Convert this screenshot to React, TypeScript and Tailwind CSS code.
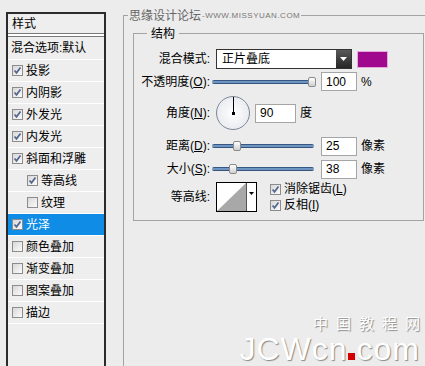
import React from "react"

const FONT = { fontFamily: '"Liberation Sans", "Noto Sans CJK SC", sans-serif' }

function CheckBox({ checked }: { checked: boolean }) {
  return (
    <span className="flex h-[11px] w-[11px] shrink-0 items-center justify-center border border-[#8c8c8c] bg-linear-to-br from-[#d8d8d8] to-[#fbfbfb]">
      {checked && (
        <svg width="9" height="9" viewBox="0 0 9 9">
          <path d="M1.5 4.5 L3.5 6.8 L7.5 1.5" fill="none" stroke="#56688f" strokeWidth="1.8" />
        </svg>
      )}
    </span>
  )
}

const styleRows = [
  { label: "投影", checked: true, indent: false },
  { label: "内阴影", checked: true, indent: false },
  { label: "外发光", checked: true, indent: false },
  { label: "内发光", checked: true, indent: false },
  { label: "斜面和浮雕", checked: true, indent: false },
  { label: "等高线", checked: true, indent: true },
  { label: "纹理", checked: false, indent: true },
  { label: "光泽", checked: true, indent: false, active: true },
  { label: "颜色叠加", checked: false, indent: false },
  { label: "渐变叠加", checked: false, indent: false },
  { label: "图案叠加", checked: false, indent: false },
  { label: "描边", checked: false, indent: false },
]

function Slider({ pos }: { pos: number }) {
  return (
    <div className="relative ml-[2px] flex h-[12px] w-[102px] items-center">
      <div className="h-[4px] w-full rounded-full bg-linear-to-b from-[#1d3a66] via-[#8db6e2] to-[#1a355e]" />
      <div
        className="absolute top-[1px] h-[10px] w-[8px] rounded-[2px] border border-[#8a8a8a] bg-linear-to-b from-white to-[#d0d0d0]"
        style={{ left: pos }}
      />
    </div>
  )
}

function NumBox({ value, width }: { value: string; width: string }) {
  return (
    <div className={`flex h-[19px] items-center border border-[#a5a5a5] bg-white pl-[4px] text-[12px] ${width}`}>
      {value}
    </div>
  )
}

export default function App() {
  return (
    <div className="relative flex h-[366px] w-[425px] items-start overflow-hidden bg-[#ececec] text-[12px] text-black" style={FONT}>
      {/* styles list */}
      <div className="ml-[6px] mt-[12px] h-[360px] w-[100px] shrink-0 border-2 border-[#2b2b2b] bg-[#eeeeee]">
        <div className="flex h-[19px] items-center pl-[4px]">样式</div>
        <div className="h-[4px] border-y border-[#7a7a7a] bg-white" />
        <div className="flex h-[23px] items-center border-b border-white pl-[3px]">混合选项:默认</div>
        {styleRows.map((r) => (
          <div
            key={r.label}
            className={`flex h-[22px] items-center gap-[3px] border-b border-white ${r.indent ? "pl-[19px]" : "pl-[4px]"} ${r.active ? "bg-[#0f8ce6] text-white" : ""}`}
          >
            <CheckBox checked={r.checked} />
            <span>{r.label}</span>
          </div>
        ))}
      </div>

      {/* outer group */}
      <div className="relative ml-[17px] mt-[15px] h-[360px] w-[320px] shrink-0 border-l border-t border-[#a3a3a3]">
        <div className="absolute -top-[9px] left-[4px] flex items-center gap-[1px] bg-[#ececec] px-[1px] text-[#666]">
          <span>思缘设计论坛</span>
          <span className="text-[8px] tracking-[0.5px] text-[#777]">-WWW.MISSYUAN.COM</span>
        </div>

        {/* inner group */}
        <div className="relative ml-[9px] mt-[17px] h-[188px] w-[291px] border border-[#a3a3a3]">
          <div className="absolute -top-[9px] left-[13px] bg-[#ececec] px-[4px]">结构</div>

          <div className="mt-[15px] flex flex-col">
            <div className="flex h-[20px] items-center">
              <div className="w-[76px] text-right">混合模式:</div>
              <div className="ml-[6px] flex h-[20px] w-[136px] border border-[#333] bg-white">
                <div className="flex flex-1 items-center pl-[5px]">正片叠底</div>
                <div className="flex w-[15px] items-center justify-center bg-linear-to-b from-[#5a5a5a] to-[#262626]">
                  <svg width="7" height="4" viewBox="0 0 7 4">
                    <path d="M0 0 H7 L3.5 4 Z" fill="#fff" />
                  </svg>
                </div>
              </div>
              <div className="ml-[5px] h-[17px] w-[31px] border border-[#e6a8dc] bg-[#a0088e]" />
            </div>

            <div className="mt-[3px] flex h-[19px] items-center">
              <div className="w-[76px] text-right">
                不透明度(<u>O</u>):
              </div>
              <Slider pos={96} />
              <div className="ml-[7px]">
                <NumBox value="100" width="w-[36px]" />
              </div>
              <span className="ml-[4px]">%</span>
            </div>

            <div className="mt-[5px] flex h-[34px] items-center">
              <div className="w-[76px] text-right">
                角度(<u>N</u>):
              </div>
              <div className="relative ml-[6px] h-[34px] w-[34px] rounded-full border border-[#7c8798] bg-radial from-white to-[#e2e4ea]">
                <div className="absolute left-[16px] top-0 h-[16px] w-[1px] bg-black" />
                <div className="absolute left-[15px] top-[15px] h-[3px] w-[3px] bg-black" />
              </div>
              <div className="ml-[5px]">
                <NumBox value="90" width="w-[41px]" />
              </div>
              <span className="ml-[4px]">度</span>
            </div>

            <div className="mt-[6px] flex h-[20px] items-center">
              <div className="w-[76px] text-right">
                距离(<u>D</u>):
              </div>
              <Slider pos={21} />
              <div className="ml-[7px]">
                <NumBox value="25" width="w-[36px]" />
              </div>
              <span className="ml-[4px]">像素</span>
            </div>

            <div className="mt-[3px] flex h-[20px] items-center">
              <div className="w-[76px] text-right">
                大小(<u>S</u>):
              </div>
              <Slider pos={17} />
              <div className="ml-[7px]">
                <NumBox value="38" width="w-[36px]" />
              </div>
              <span className="ml-[4px]">像素</span>
            </div>

            <div className="mt-[3px] flex h-[30px] items-center">
              <div className="w-[76px] text-right">等高线:</div>
              <div className="ml-[6px] flex h-[30px] w-[41px] border border-black bg-white">
                <svg width="29" height="28" viewBox="0 0 29 28" className="block">
                  <path d="M0 28 L29 0 L29 28 Z" fill="#a8a8a8" />
                </svg>
                <div className="flex flex-1 justify-center border-l border-[#555] pt-[9px]">
                  <svg width="5" height="3" viewBox="0 0 5 3">
                    <path d="M0 0 H5 L2.5 3 Z" fill="#000" />
                  </svg>
                </div>
              </div>
              <div className="ml-[13px] flex flex-col">
                <div className="flex h-[16px] items-center gap-[3px]">
                  <CheckBox checked />
                  <span>
                    消除锯齿(<u>L</u>)
                  </span>
                </div>
                <div className="flex h-[16px] items-center gap-[3px]">
                  <CheckBox checked />
                  <span>
                    反相(<u>I</u>)
                  </span>
                </div>
              </div>
            </div>
          </div>
        </div>
      </div>

      {/* watermark */}
      <div className="absolute bottom-[1px] right-[5px] flex flex-col items-end text-white [text-shadow:1px_1px_1px_#8a8a8a]">
        <div className="text-[15px] leading-[18px]">
          <span className="tracking-[8px]">中国教程</span>网
        </div>
        <div className="flex items-end text-[32px] leading-none tracking-[1px]">
          <span>JCWcn</span>
          <span className="mb-[5px] mr-[2px] h-[7px] w-[7px] bg-[#d40000]" />
          <span>com</span>
        </div>
      </div>
    </div>
  )
}
